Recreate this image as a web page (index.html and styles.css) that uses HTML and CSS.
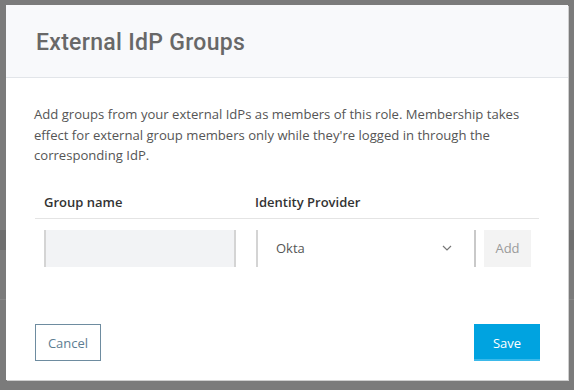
FILE: index.html
```html
<!DOCTYPE html>
<html lang="en">

<head>
    <meta charset="UTF-8">
    <meta name="viewport" content="width=device-width, initial-scale=1.0">
    <title>External IdP Groups</title>
    <link rel="stylesheet" href="styles.css">
</head>

<body>
    <div class="modal">
        <div class="modal-header">
            <h1>External IdP Groups</h1>
        </div>

        <div class="modal-body">
            <p class="intro">Add groups from your external IdPs as members of this role. Membership takes
                effect for external group members only while they're logged in through the
                corresponding IdP.</p>

            <div class="groups-table">
                <div class="table-head">
                    <div class="col-name">Group name</div>
                    <div class="col-idp">Identity Provider</div>
                </div>
                <div class="table-row">
                    <div class="col-name">
                        <input type="text" class="group-input">
                    </div>
                    <div class="col-idp">
                        <div class="idp-select">
                            <span>Okta</span>
                            <svg class="chevron" width="10" height="6" viewBox="0 0 10 6">
                                <path d="M1 1l4 4 4-4" fill="none" stroke="#777" stroke-width="1.2" />
                            </svg>
                        </div>
                        <button class="btn-add">Add</button>
                    </div>
                </div>
            </div>
        </div>

        <div class="modal-footer">
            <button class="btn-cancel">Cancel</button>
            <button class="btn-save">Save</button>
        </div>
    </div>
</body>

</html>
```

FILE: styles.css
```css
body {
    margin: 0;
    padding: 5px 6px;
    height: 390px;
    box-sizing: border-box;
    overflow: hidden;
    font-family: 'Open Sans', sans-serif;
    background: linear-gradient(to bottom,
            #7b7b7b 0, #7b7b7b 230px,
            #6f6f6f 230px, #6f6f6f 250px,
            #7b7b7b 250px, #7b7b7b 299px,
            #868686 299px, #868686 300px,
            #7b7b7b 300px);
}

.modal {
    width: 562px;
    height: 375px;
    background-color: #fff;
    display: flex;
    flex-direction: column;
    box-shadow: 1px 1px 0 #cfcfcf;
}

.modal-header {
    height: 73px;
    box-sizing: border-box;
    background-color: #f8f9fb;
    border-bottom: 1px solid #e2e5e9;
    display: flex;
    align-items: center;
    padding: 3px 30px 0;
}

.modal-header h1 {
    margin: 0;
    font-family: 'Roboto', sans-serif;
    font-weight: 500;
    font-size: 23px;
    color: #686868;
    letter-spacing: 0.3px;
}

.modal-body {
    flex: 1;
    padding: 26px 28px 0;
}

.intro {
    margin: 0;
    font-size: 13.1px;
    line-height: 20.5px;
    color: #555;
}

.groups-table {
    margin: 26px 1px 0;
}

.table-head {
    display: flex;
    border-bottom: 1px solid #e4e4e4;
    padding-bottom: 6px;
    font-size: 13px;
    font-weight: 600;
    line-height: 20px;
    color: #333;
}

.table-head .col-name {
    padding-left: 9px;
}

.table-head .col-idp {
    padding-left: 9px;
}

.col-name {
    width: 211px;
    box-sizing: border-box;
}

.col-idp {
    flex: 1;
}

.table-row {
    display: flex;
    padding-top: 11px;
}

.table-row .col-name {
    padding: 0 10px 0 9px;
}

.table-row .col-idp {
    display: flex;
    padding: 0 8px 0 10px;
}

.group-input {
    display: block;
    width: 100%;
    height: 37px;
    box-sizing: border-box;
    margin: 0;
    background-color: #f2f3f5;
    border: none;
    border-left: 2px solid #d4d4d4;
    border-right: 2px solid #d4d4d4;
    outline: none;
}

.idp-select {
    flex: 1;
    height: 37px;
    box-sizing: border-box;
    border-left: 2px solid #d4d4d4;
    border-right: 2px solid #c9c9c9;
    display: flex;
    align-items: center;
    justify-content: space-between;
    padding: 0 22px 0 18px;
    font-size: 13px;
    color: #555;
}

.chevron {
    display: block;
}

.btn-add {
    width: 47px;
    height: 37px;
    margin-left: 8px;
    border: none;
    background-color: #f3f3f3;
    font-family: 'Open Sans', sans-serif;
    font-size: 13px;
    color: #9a9a9a;
    padding: 0;
}

.modal-footer {
    display: flex;
    justify-content: space-between;
    padding: 0 28px 19px 29px;
}

.btn-cancel,
.btn-save {
    width: 66px;
    height: 37px;
    box-sizing: border-box;
    font-family: 'Open Sans', sans-serif;
    font-size: 13px;
    padding: 0;
}

.btn-cancel {
    background-color: #fff;
    border: 1px solid #6e8ca0;
    color: #5d7d92;
}

.btn-save {
    background-color: #00a3e0;
    border: none;
    border-bottom: 2px solid #3bb9ea;
    color: #fff;
    padding-top: 2px;
}
```
